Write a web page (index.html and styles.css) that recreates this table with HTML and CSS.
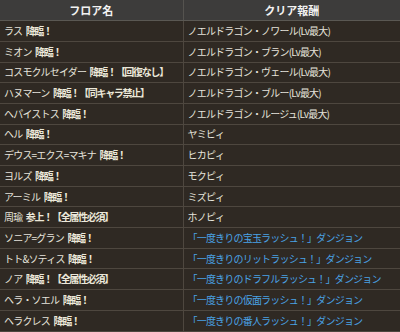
FILE: index.html
```html
<!DOCTYPE html>
<html lang="ja">
<head>
<meta charset="utf-8">
<link rel="stylesheet" href="styles.css">
</head>
<body>
<table class="floors">
  <thead>
    <tr><th class="c-floor">フロア名</th><th class="c-reward">クリア報酬</th></tr>
  </thead>
  <tbody>
    <tr><td>ラス <b>降臨！</b></td><td>ノエルドラゴン・ノワール(Lv最大)</td></tr>
    <tr><td>ミオン <b>降臨！</b></td><td>ノエルドラゴン・ブラン(Lv最大)</td></tr>
    <tr><td>コスモクルセイダー <b>降臨！【回復なし】</b></td><td>ノエルドラゴン・ヴェール(Lv最大)</td></tr>
    <tr><td>ハヌマーン <b>降臨！【同キャラ禁止】</b></td><td>ノエルドラゴン・ブルー(Lv最大)</td></tr>
    <tr><td>ヘパイストス <b>降臨！</b></td><td>ノエルドラゴン・ルージュ(Lv最大)</td></tr>
    <tr><td>ヘル <b>降臨！</b></td><td>ヤミピィ</td></tr>
    <tr><td>デウス=エクス=マキナ <b>降臨！</b></td><td>ヒカピィ</td></tr>
    <tr><td>ヨルズ <b>降臨！</b></td><td>モクピィ</td></tr>
    <tr><td>アーミル <b>降臨！</b></td><td>ミズピィ</td></tr>
    <tr><td>周瑜 <b>参上！【全属性必須】</b></td><td>ホノピィ</td></tr>
    <tr><td>ソニア=グラン <b>降臨！</b></td><td><a class="link">「一度きりの宝玉ラッシュ！」ダンジョン</a></td></tr>
    <tr><td>トト&amp;ソティス <b>降臨！</b></td><td><a class="link">「一度きりのリットラッシュ！」ダンジョン</a></td></tr>
    <tr><td>ノア <b>降臨！【全属性必須】</b></td><td><a class="link">「一度きりのドラフルラッシュ！」ダンジョン</a></td></tr>
    <tr><td>ヘラ・ソエル <b>降臨！</b></td><td><a class="link">「一度きりの仮面ラッシュ！」ダンジョン</a></td></tr>
    <tr><td>ヘラクレス <b>降臨！</b></td><td><a class="link">「一度きりの番人ラッシュ！」ダンジョン</a></td></tr>
  </tbody>
</table>
</body>
</html>
```
FILE: styles.css
```css
html, body {
  margin: 0;
  padding: 0;
  background: #2f2923;
}
body {
  width: 400px;
  height: 332px;
  overflow: hidden;
  font-family: "Noto Sans CJK JP", "Noto Sans", sans-serif;
  font-size: 10px;
  letter-spacing: -0.8px;
  word-spacing: 2px;
  color: #e6e4dc;
}
.floors {
  width: 400px;
  border-collapse: collapse;
  table-layout: fixed;
}
.floors th, .floors td {
  height: 20.7px;
  padding: 0 0 0 4px;
  box-sizing: border-box;
  line-height: 12px;
  white-space: nowrap;
  overflow: hidden;
  text-align: left;
  vertical-align: middle;
}
.floors th {
  background: #3d3c3b;
  color: #f2f2f2;
  font-size: 11px;
  letter-spacing: 0;
  font-weight: bold;
  text-align: center;
  padding: 0;
  border-bottom: 1px solid #5a5853;
}
.floors th.c-floor {
  width: 183px;
  border-right: 1px solid #55534f;
}
.floors td {
  border-bottom: 1px solid #4e473f;
}
.floors td:first-child {
  border-right: 1px solid #4e473f;
}
.floors td b {
  font-weight: bold;
  letter-spacing: -1.3px;
  color: #ece8da;
}
.link {
  color: #4aa3e6;
  text-decoration: none;
}
```
